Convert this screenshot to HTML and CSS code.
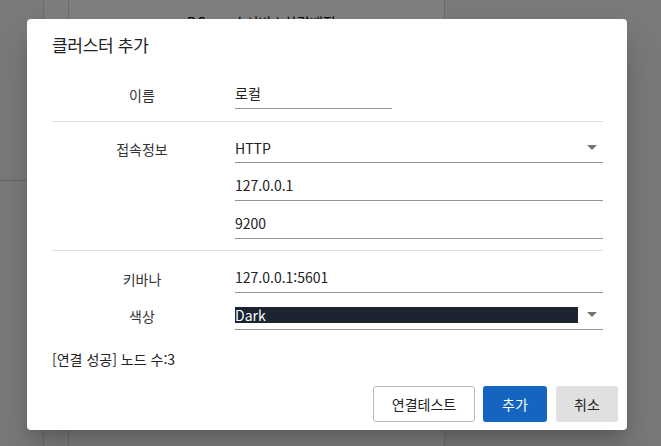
FILE: index.html
```html
<!DOCTYPE html>
<html lang="ko">
<head>
<meta charset="utf-8">
<title>클러스터 추가</title>
<link rel="stylesheet" href="styles.css">
</head>
<body>
<div class="page">
  <div class="side">
    <div class="side-top"></div>
    <div class="side-rest"></div>
  </div>
  <div class="narrow"></div>
  <div class="main"><div class="bg-text">DC-prod 서비스차량배정</div></div>
  <div class="right"></div>
</div>
<div class="overlay"></div>
<div class="dialog">
  <div class="title">클러스터 추가</div>
  <div class="section first">
    <div class="label">이름</div>
    <div class="fields">
      <div class="field short">로컬</div>
    </div>
  </div>
  <div class="section conn">
    <div class="label">접속정보</div>
    <div class="fields">
      <div class="field select"><span class="val">HTTP</span><span class="arrow"></span></div>
      <div class="field">127.0.0.1</div>
      <div class="field">9200</div>
    </div>
  </div>
  <div class="section last">
    <div class="label">키바나</div>
    <div class="fields">
      <div class="field">127.0.0.1:5601</div>
    </div>
    <div class="label">색상</div>
    <div class="fields">
      <div class="field select"><span class="val hl">Dark</span><span class="arrow"></span></div>
    </div>
  </div>
  <div class="status">[연결 성공] 노드 수:3</div>
  <div class="actions">
    <button class="btn outline">연결테스트</button>
    <button class="btn primary">추가</button>
    <button class="btn grey">취소</button>
  </div>
</div>
</body>
</html>
```
FILE: styles.css
```css
* { box-sizing: border-box; }
html, body { margin: 0; padding: 0; }
body {
  width: 661px;
  height: 446px;
  overflow: hidden;
  font-family: "Noto Sans CJK KR", "Noto Sans", sans-serif;
  font-size: 14px;
  color: #222;
  background: #fff;
  position: relative;
}
.page { display: flex; height: 446px; }
.side { width: 44px; background: #f4f4f4; border-right: 1px solid #d8d8d8; display: flex; flex-direction: column; }
.side-top { height: 181px; border-bottom: 1px solid #cfcfcf; }
.narrow { width: 25px; background: #fbfbfb; border-right: 1px solid #d8d8d8; }
.main { width: 376px; background: #fff; border-right: 1px solid #d8d8d8; }
.bg-text { padding: 12px 0 0 118px; line-height: 20px; font-size: 14px; color: #000; white-space: nowrap; }
.right { flex: 1; background: #f4f4f4; }
.overlay { position: absolute; inset: 0; background: rgba(0,0,0,0.5); }

.dialog {
  position: absolute;
  left: 27px; top: 19px;
  width: 600px; height: 411px;
  background: #fff;
  border-radius: 4px;
  box-shadow: 0 11px 15px -7px rgba(0,0,0,.2), 0 24px 38px 3px rgba(0,0,0,.14);
  padding: 14px 9px 8px 25px;
}
.title { font-size: 17px; line-height: 24px; color: #212121; margin-bottom: 11px; letter-spacing: -0.3px; }
.section {
  display: grid;
  grid-template-columns: 180px 368px;
  column-gap: 3px;
  row-gap: 8px;
  padding: 12px 0;
  margin-right: 15px;
  border-bottom: 1px solid #e0e0e0;
}
.section.conn { padding-bottom: 11px; }
.section.conn .fields { gap: 9px; }
.section.last { border-bottom: none; padding: 13px 0 0; }
.label { text-align: center; line-height: 26px; color: #333; padding-top: 2px; }
.fields { display: flex; flex-direction: column; gap: 8px; }
.field {
  height: 29px;
  line-height: 26px;
  border-bottom: 1px solid #949494;
  color: #222;
}
.field.short { width: 157px; }
.select { display: flex; align-items: center; padding-bottom: 1px; }
.val { flex: 1; }
.val.hl { flex: 0 0 343px; background: #1c2331; color: #fff; line-height: 16px; height: 16px; }
.arrow {
  margin-left: auto;
  margin-right: 6px;
  width: 0; height: 0;
  border-left: 5px solid transparent;
  border-right: 5px solid transparent;
  border-top: 5px solid #757575;
}
.status { margin-top: 19px; line-height: 20px; color: #222; }
.actions { display: flex; justify-content: flex-end; gap: 8px; margin-top: 17px; }
.btn {
  font-family: inherit;
  font-size: 14px;
  height: 36px;
  border-radius: 3px;
  border: 1px solid transparent;
  padding: 0;
}
.outline { width: 102px; background: #fff; border-color: #bdbdbd; color: #222; }
.primary { width: 64px; background: #1565c0; color: #fff; }
.grey { width: 62px; background: #e0e0e0; color: #222; margin-left: 1px; }
```
